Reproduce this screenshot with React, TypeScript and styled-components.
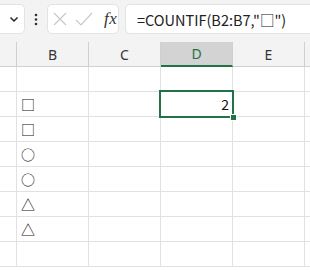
import React from "react";
import styled, { createGlobalStyle } from "styled-components";

const GlobalStyle = createGlobalStyle`
  html, body {
    margin: 0;
    padding: 0;
    background: #ffffff;
    overflow: hidden;
  }
  body {
    font-family: "Noto Sans", "Noto Sans CJK JP", sans-serif;
  }
`;

const GRID = "#e1e1e1";
const GREEN = "#217346";

const Page = styled.div`
  width: 310px;
  height: 272px;
  overflow: hidden;
  display: flex;
  flex-direction: column;
`;

const Top = styled.div`
  background: #f3f3f3;
  padding-top: 4px;
`;

const Toolbar = styled.div`
  display: flex;
  align-items: center;
  height: 30px;
  margin-left: -6px;
`;

const Box = styled.div<{ $w?: number; $grow?: boolean }>`
  box-sizing: border-box;
  height: 30px;
  background: #ffffff;
  border: 1px solid #e3e3e3;
  border-radius: 5px;
  display: flex;
  align-items: center;
  flex: ${(p) => (p.$grow ? "1 0 auto" : "0 0 auto")};
  width: ${(p) => (p.$w ? `${p.$w}px` : "auto")};
`;

const NameBox = styled(Box)`
  justify-content: flex-end;
  padding-right: 5px;
`;

const Dots = styled.div`
  width: 22px;
  display: flex;
  justify-content: center;
`;

const ButtonsBox = styled(Box)`
  margin-right: 6px;
  padding-left: 4px;
`;

const Fx = styled.span`
  font-family: "Liberation Serif", "DejaVu Serif", serif;
  font-style: italic;
  font-size: 17px;
  color: #333333;
  margin-left: 6px;
  letter-spacing: 0.5px;
`;

const FormulaBox = styled(Box)`
  padding-left: 11px;
  font-family: "Noto Sans CJK JP", "Noto Sans", sans-serif;
  font-size: 14.5px;
  color: #222222;
  white-space: nowrap;
  margin-right: -20px;
`;

const Grid = styled.div<{ $gap?: number }>`
  display: grid;
  grid-template-columns: 17px 72px 72px 72px 72px 40px;
  margin-top: ${(p) => p.$gap ?? 0}px;
`;

const HeadCell = styled.div<{ $active?: boolean }>`
  box-sizing: border-box;
  height: 25px;
  display: flex;
  align-items: center;
  justify-content: center;
  font-family: "Noto Sans", sans-serif;
  font-size: 14px;
  color: ${(p) => (p.$active ? GREEN : "#333333")};
  background: ${(p) => (p.$active ? "#d3d3d3" : "#f3f3f3")};
  border-right: 1px solid #d0d0d0;
  border-bottom: ${(p) => (p.$active ? `2px solid ${GREEN}` : "1px solid #d0d0d0")};
`;

const Cell = styled.div<{ $num?: boolean; $top?: boolean }>`
  box-sizing: border-box;
  position: relative;
  z-index: ${(p) => (p.$top ? 2 : 0)};
  height: 25px;
  border-right: 1px solid ${GRID};
  border-bottom: 1px solid ${GRID};
  display: flex;
  align-items: center;
  justify-content: ${(p) => (p.$num ? "flex-end" : "flex-start")};
  padding: 0 3px 0 4px;
  font-family: "Noto Sans CJK JP", "Noto Sans", sans-serif;
  font-size: 14px;
  color: #111111;
`;

const Selection = styled.div`
  position: absolute;
  left: -2px;
  top: -2px;
  right: -2px;
  bottom: -2px;
  border: 2px solid ${GREEN};
  pointer-events: none;
`;

const Handle = styled.div`
  position: absolute;
  right: -5px;
  bottom: -5px;
  width: 5px;
  height: 5px;
  background: ${GREEN};
  border: 1px solid #ffffff;
`;

const cols = ["", "B", "C", "D", "E", ""];
const symbols = ["", "□", "□", "○", "○", "△", "△", ""];

export default function App() {
  return (
    <Page>
      <GlobalStyle />
      <Top>
        <Toolbar>
          <NameBox $w={31}>
            <svg width="10" height="7" viewBox="0 0 10 7">
              <path d="M1.5 1.5 L5 5 L8.5 1.5" fill="none" stroke="#222" strokeWidth="1.5" />
            </svg>
          </NameBox>
          <Dots>
            <svg width="4" height="13" viewBox="0 0 4 13">
              <circle cx="2" cy="2" r="1.3" fill="#333" />
              <circle cx="2" cy="6.5" r="1.3" fill="#333" />
              <circle cx="2" cy="11" r="1.3" fill="#333" />
            </svg>
          </Dots>
          <ButtonsBox $w={72}>
            <svg width="46" height="18" viewBox="0 0 46 18">
              <path d="M2 3 L14 15 M14 3 L2 15" stroke="#c8c8c8" strokeWidth="1.2" fill="none" />
              <path d="M24 10 L29 15 L40 3" stroke="#c8c8c8" strokeWidth="1.2" fill="none" />
            </svg>
            <Fx>fx</Fx>
          </ButtonsBox>
          <FormulaBox $grow>=COUNTIF(B2:B7,"□")</FormulaBox>
        </Toolbar>
        <Grid $gap={8}>
          {cols.map((c, i) => (
            <HeadCell key={i} $active={c === "D"}>
              {c}
            </HeadCell>
          ))}
        </Grid>
      </Top>
      <Grid>
        {symbols.map((s, r) =>
          cols.map((c, i) => {
            const selected = c === "D" && r === 1;
            return (
              <Cell key={`${r}-${i}`} $num={c === "D"} $top={selected}>
                {c === "B" ? s : ""}
                {selected ? (
                  <>
                    2
                    <Selection />
                    <Handle />
                  </>
                ) : null}
              </Cell>
            );
          })
        )}
      </Grid>
    </Page>
  );
}
